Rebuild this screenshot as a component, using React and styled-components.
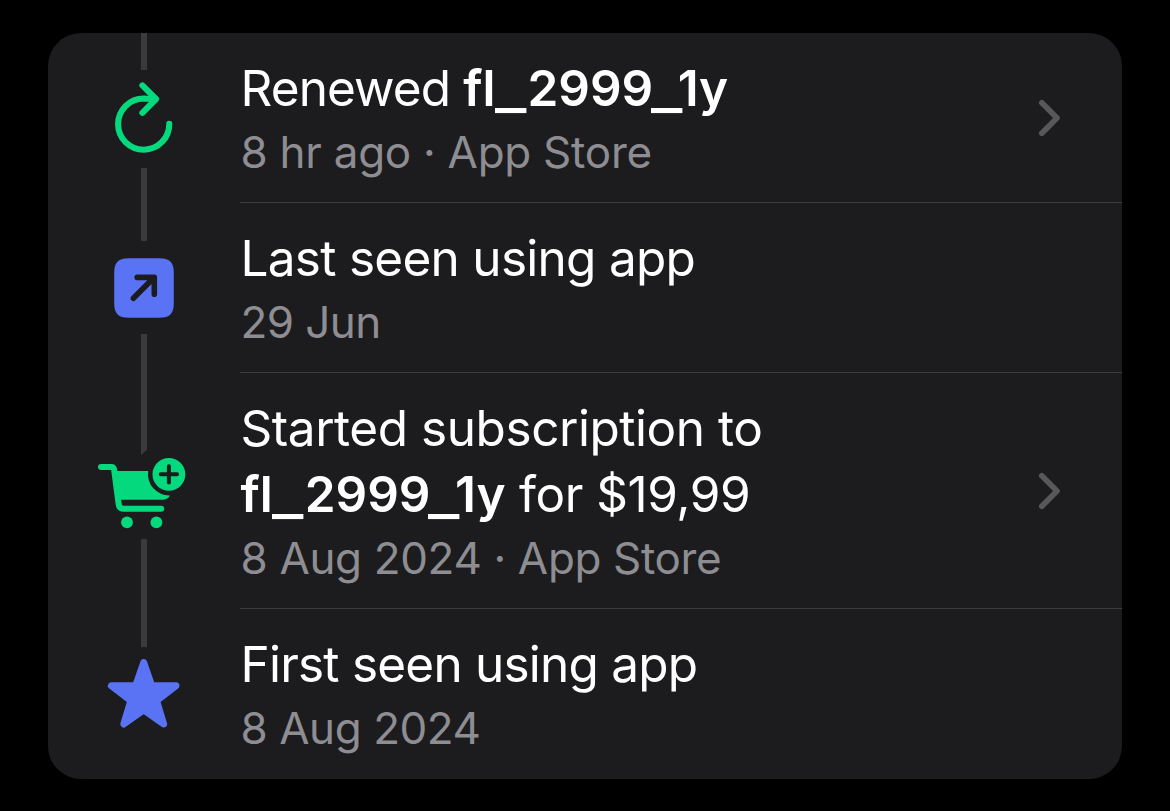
import React from 'react';
import styled, { createGlobalStyle } from 'styled-components';

const GlobalStyle = createGlobalStyle`
    * {
        box-sizing: border-box;
    }

    body {
        margin: 0;
        background: #000;
        font-family: Inter, "Liberation Sans", sans-serif;
    }
`;

const Page = styled.main`
    height: 811px;
    padding: 33px 48px 32px;
    overflow: hidden;
`;

const Card = styled.ul`
    list-style: none;
    margin: 0;
    padding: 0;
    background: #1c1c1e;
    border-radius: 33px;
    overflow: hidden;
`;

const Row = styled.li`
    display: grid;
    grid-template-columns: 192px 1fr;
    min-height: ${({ $height }) => $height}px;
`;

const Rail = styled.div`
    display: flex;
    flex-direction: column;
    align-items: center;
`;

const Line = styled.span`
    width: 6px;
    height: ${({ $height }) => ($height ? `${$height}px` : 'auto')};
    flex: ${({ $height }) => ($height ? 'none' : '1')};
    background: #3a3a3c;
    clip-path: ${({ $notched }) =>
        $notched ? 'polygon(0 0, 100% 0, 100% calc(100% - 5px), 0 100%)' : 'none'};
`;

const Icon = styled.svg`
    display: block;
    flex: none;
    width: 120px;
    height: ${({ $height }) => $height}px;
    fill: none;
    stroke-linecap: round;
    stroke-linejoin: round;
`;

const Content = styled.div`
    display: flex;
    align-items: center;
    justify-content: space-between;
    padding: 0 60px 0 0.5px;
    border-bottom: ${({ $last }) => ($last ? 'none' : '1px solid #3d3d40')};
`;

const Texts = styled.div`
    padding-top: ${({ $last }) => ($last ? 2 : 3)}px;
`;

const Title = styled.h2`
    margin: 0;
    color: #fff;
    font-size: 49.5px;
    font-weight: 400;
    line-height: 66px;
    letter-spacing: ${({ $tracking }) => $tracking}px;
    white-space: nowrap;
`;

const Product = styled.strong`
    font-weight: 600;
    font-variant-ligatures: none;
    letter-spacing: 0;
`;

// wide underscore between the parts of a product id
const Underscore = styled.span`
    display: inline-block;
    width: 23px;
    margin: 0 5.5px 0 3.5px;
    text-align: center;
    transform: translateY(2px) scaleX(1.35);

    &:last-of-type {
        margin: 0 0 0 1.5px;
    }
`;

const Subtitle = styled.p`
    margin: 0;
    color: #8d8d92;
    font-size: 44px;
    line-height: 62px;
    letter-spacing: ${({ $tracking }) => $tracking}px;
    white-space: nowrap;
`;

const Chevron = styled.svg`
    width: 24px;
    height: 40px;
    fill: none;
    stroke: #58585b;
    stroke-width: 5.6;
    stroke-linecap: round;
    stroke-linejoin: round;
`;

const RenewIcon = () => (
    <Icon $height={98} viewBox="0 0 120 98" stroke="#04da7d" strokeWidth="6.1">
        <path d="M85.3 53.7A25.6 25.6 0 1 1 59.7 28.5L71 29.2" />
        <path d="M58.4 15.4L72 29L58.4 42.8" />
    </Icon>
);

const OpenIcon = () => (
    <Icon $height={93} viewBox="0 0 120 93">
        <path
            fill="#5973f4"
            d="M45 17.2H75C86 17.2 89.8 21.4 89.8 32V62C89.8 72.6 86 76.8 75 76.8H45C34 76.8 30.2 72.6 30.2 62V32C30.2 21.4 34 17.2 45 17.2Z"
        />
        <path stroke="#1c1c1e" strokeWidth="5.6" d="M49.4 57.2L70 36.6M53.2 36.4H70.3V53.3" />
    </Icon>
);

const CartIcon = () => (
    <Icon $height={84} viewBox="0 0 120 84">
        <path stroke="#04da7d" strokeWidth="6" d="M17 12H27.5Q29.8 12 30.2 15L34.7 49.5Q35.3 53.7 39.5 53.7H77.2" />
        <path fill="#04da7d" d="M30 16H64.2A21.2 21.2 0 0 0 86 40.4Q83.5 44.8 78 44.8H34Z" />
        <circle cx="43" cy="67.3" r="5.9" fill="#04da7d" />
        <circle cx="72.4" cy="67.3" r="5.9" fill="#04da7d" />
        <circle cx="84.9" cy="19.3" r="16.4" fill="#04da7d" />
        <path stroke="#1c1c1e" strokeWidth="4" d="M76.8 19.3H93M84.9 11.2V27.4" />
    </Icon>
);

const StarIcon = () => (
    <Icon $height={96} viewBox="0 0 120 96">
        <path
            fill="#5973f4"
            stroke="#5973f4"
            strokeWidth="7"
            d="M59.7 15.6L67.6 38.5L92 38.8L72.5 53.6L79.6 77L59.7 62.9L39.8 77L46.9 53.6L27.4 38.8L51.8 38.5Z"
        />
    </Icon>
);

const ProductId = ({ id }) => (
    <Product>
        {id.split('_').map((part, index) => (
            <React.Fragment key={index}>
                {index > 0 && <Underscore>_</Underscore>}
                {part}
            </React.Fragment>
        ))}
    </Product>
);

const events = [
    {
        height: 170,
        lineTop: 37,
        icon: <RenewIcon />,
        title: <>Renewed <ProductId id="fl_2999_1y" /></>,
        titleTracking: -0.9,
        subtitle: '8 hr ago · App Store',
        subtitleTracking: -0.27,
        link: true,
    },
    {
        height: 170,
        lineTop: 38,
        icon: <OpenIcon />,
        title: 'Last seen using app',
        titleTracking: -0.72,
        subtitle: '29 Jun',
        subtitleTracking: -0.6,
    },
    {
        height: 236,
        lineTop: 82,
        notched: true,
        icon: <CartIcon />,
        title: <>Started subscription to<br /><ProductId id="fl_2999_1y" /> for $19,99</>,
        titleTracking: -0.45,
        subtitle: '8 Aug 2024 · App Store',
        subtitleTracking: -0.35,
        link: true,
    },
    {
        height: 170,
        lineTop: 38,
        icon: <StarIcon />,
        title: 'First seen using app',
        titleTracking: -0.78,
        subtitle: '8 Aug 2024',
        subtitleTracking: -0.45,
    },
];

const App = () => {
    return (
        <>
            <GlobalStyle />
            <Page>
                <Card>
                    {events.map((event, index) => {
                        const last = index === events.length - 1;
                        return (
                            <Row key={index} $height={event.height}>
                                <Rail>
                                    <Line $height={event.lineTop} $notched={event.notched} />
                                    {event.icon}
                                    {!last && <Line />}
                                </Rail>
                                <Content $last={last}>
                                    <Texts $last={last}>
                                        <Title $tracking={event.titleTracking}>{event.title}</Title>
                                        <Subtitle $tracking={event.subtitleTracking}>{event.subtitle}</Subtitle>
                                    </Texts>
                                    {event.link && (
                                        <Chevron viewBox="0 0 24 40">
                                            <path d="M3.8 4.7L19 20L3.8 35.3" />
                                        </Chevron>
                                    )}
                                </Content>
                            </Row>
                        );
                    })}
                </Card>
            </Page>
        </>
    );
};

export default App;
